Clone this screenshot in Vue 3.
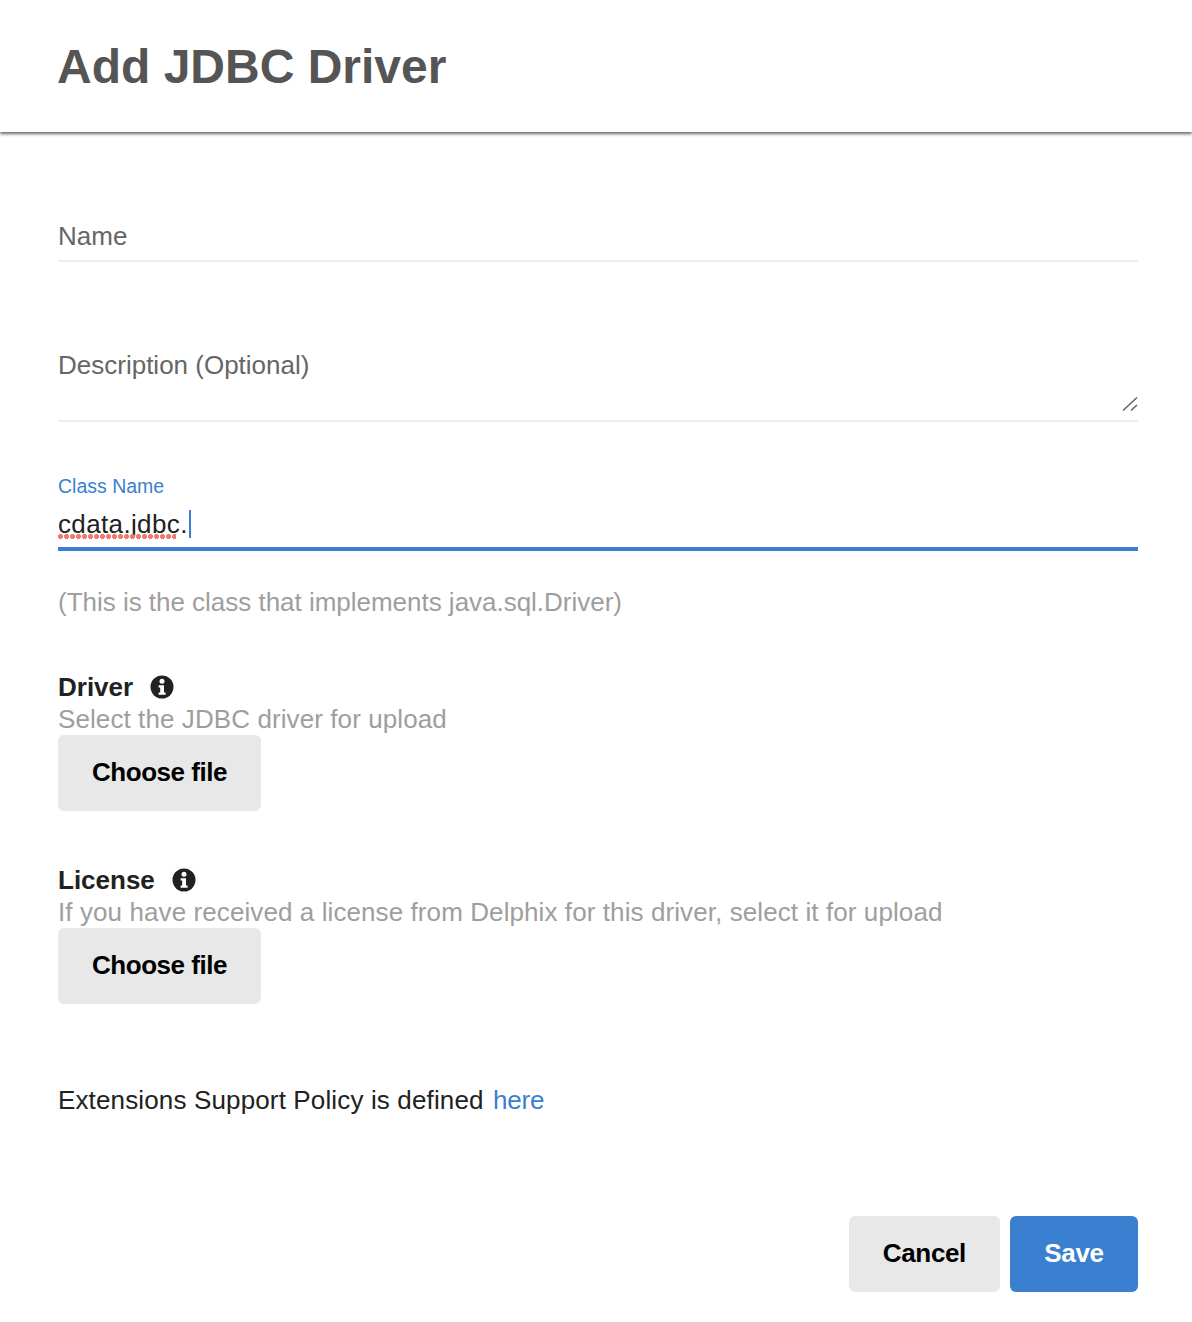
<script setup>
const uploads = [
  { title: 'Driver', hint: 'Select the JDBC driver for upload' },
  { title: 'License', hint: 'If you have received a license from Delphix for this driver, select it for upload' }
]
</script>

<template>
  <div class="dialog">
    <header class="head">
      <h1>Add JDBC Driver</h1>
    </header>
    <main class="form">
      <div class="field name">Name</div>
      <div class="field desc">
        <span>Description (Optional)</span>
        <svg class="grip" width="18" height="16" viewBox="0 0 18 16">
          <path d="M3 14.5 17 1.5M11 14.5 17 9" fill="none" stroke="#666" stroke-width="1.6" />
        </svg>
      </div>
      <div class="active">
        <label>Class Name</label>
        <div class="value"><span class="typed">cdata.jdbc</span>.<i class="caret"></i></div>
      </div>
      <p class="helper">(This is the class that implements java.sql.Driver)</p>
      <section v-for="u in uploads" :key="u.title" class="upload">
        <div class="title">
          <b>{{ u.title }}</b>
          <svg width="24" height="24" viewBox="0 0 24 24">
            <circle cx="12" cy="12" r="11.5" fill="#212121" />
            <circle cx="12" cy="6.3" r="2.5" fill="#fff" />
            <path d="M8.6 10.2h5.4v7.2h1.6v2.3H8.6v-2.3h1.6v-4.9H8.6z" fill="#fff" />
          </svg>
        </div>
        <div class="hint">{{ u.hint }}</div>
        <button class="btn file" type="button">Choose file</button>
      </section>
      <p class="policy">Extensions Support Policy is defined <a>here</a></p>
      <footer class="actions">
        <button class="btn cancel" type="button">Cancel</button>
        <button class="btn save" type="button">Save</button>
      </footer>
    </main>
  </div>
</template>

<style>
html, body { background: #fff; }
</style>

<style scoped>
.dialog {
  width: 1192px;
  height: 1322px;
  overflow: hidden;
  background: #fff;
  font-family: "Liberation Sans", Arial, sans-serif;
  font-size: 26px;
  color: #212121;
}
.head {
  height: 132px;
  padding: 2px 0 0 57px;
  box-sizing: border-box;
  display: flex;
  align-items: center;
  box-shadow: 0 2px 3px rgba(0, 0, 0, .6);
  position: relative;
}
h1 {
  margin: 0;
  font-size: 48px;
  line-height: 1;
  font-weight: 700;
  color: #555;
}
.form {
  padding: 0 54px 0 58px;
}
.field {
  color: #666;
  border-bottom: 2px solid #eee;
  line-height: 30px;
}
.name {
  margin-top: 89px;
  height: 39px;
}
.desc {
  margin-top: 88px;
  height: 70px;
  position: relative;
}
.grip {
  position: absolute;
  right: 0;
  bottom: 8px;
}
.active {
  margin-top: 51px;
  height: 74px;
  border-bottom: 4px solid #3a7fd0;
}
label {
  display: block;
  font-size: 19.5px;
  line-height: 26px;
  color: #3a7fd0;
}
.value {
  margin-top: 10px;
  line-height: 30px;
  letter-spacing: .36px;
  display: flex;
  align-items: center;
}
.typed {
  position: relative;
}
.typed::after {
  content: "";
  position: absolute;
  left: 0;
  right: 4px;
  top: 25px;
  height: 5px;
  background: radial-gradient(circle at 2.5px 2.5px, #f0796c 2.2px, transparent 2.7px) 0 0 / 6px 5px repeat-x;
}
.caret {
  width: 2px;
  height: 28px;
  margin-left: 1px;
  background: #3a7fd0;
}
.helper {
  margin: 36px 0 0;
  line-height: 30px;
  letter-spacing: -.02px;
  color: #9e9e9e;
}
.upload {
  margin-top: 55px;
}
.upload + .upload {
  margin-top: 54px;
}
.title {
  display: flex;
  align-items: center;
  gap: 17px;
  height: 30px;
}
.hint {
  margin-top: 2px;
  line-height: 30px;
  letter-spacing: .09px;
  color: #9e9e9e;
}
.btn {
  display: block;
  height: 76px;
  padding: 0 34px 2px;
  margin-top: 1px;
  border: 0;
  border-radius: 6px;
  background: #e8e8e8;
  color: #000;
  font: 700 26px "Liberation Sans", Arial, sans-serif;
  letter-spacing: -.35px;
}
.file {
  letter-spacing: -.46px;
}
.policy {
  margin: 81px 0 0;
  line-height: 30px;
  letter-spacing: .14px;
}
a {
  margin-left: 2px;
  letter-spacing: -.2px;
  color: #3a7fd0;
}
.actions {
  margin-top: 101px;
  display: flex;
  justify-content: flex-end;
  gap: 10px;
}
.actions .btn {
  margin: 0;
}
.save {
  width: 128px;
  padding: 0 0 2px;
  background: #3a7fd0;
  color: #fff;
}
</style>
